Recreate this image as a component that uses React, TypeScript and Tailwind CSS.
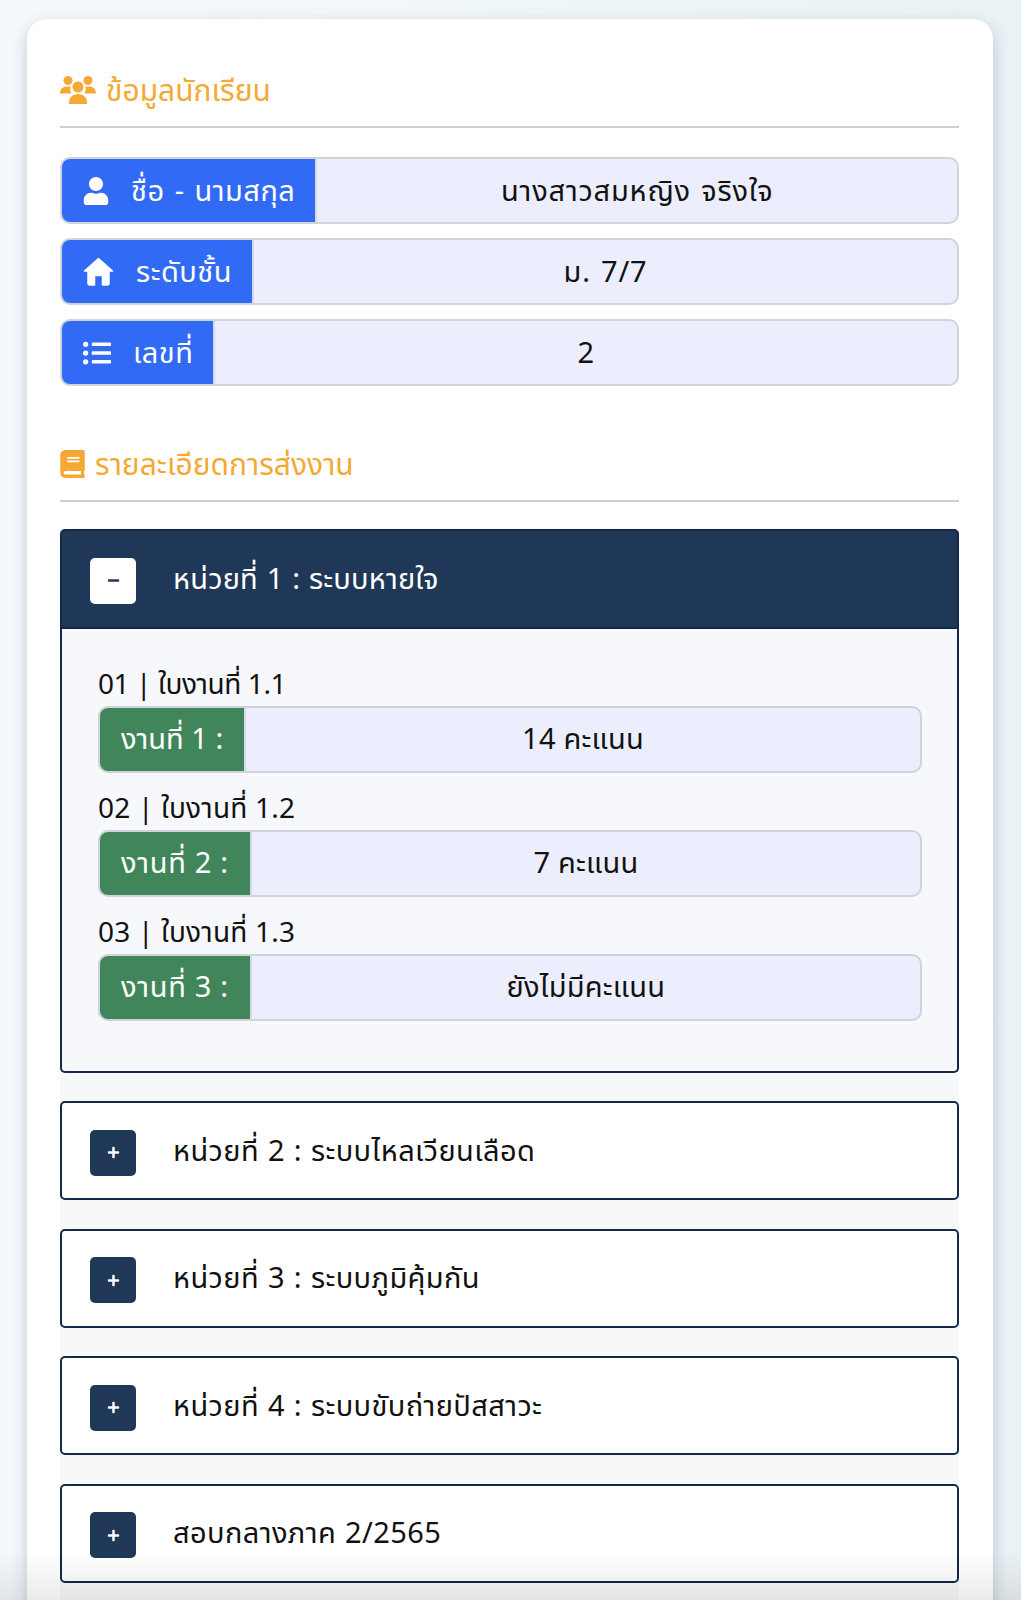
import { FaUser, FaListUl, FaBook, FaPlus, FaMinus } from 'react-icons/fa';
import type { ReactNode } from 'react';

const font = { fontFamily: '"Noto Sans", "Noto Sans Thai", "Liberation Sans", sans-serif' };

function UsersIcon() {
  return (
    <svg viewBox="0 0 36 28" className="w-[36px] h-[28px]" fill="currentColor">
      <circle cx="8" cy="4.5" r="4.5" />
      <circle cx="28" cy="4.5" r="4.5" />
      <circle cx="18" cy="11" r="5.5" />
      <path d="M0 17.5C0 13 3 10.5 7 10.5h3.5a8 8 0 0 0 1 7z" />
      <path d="M36 17.5c0-4.500-3-7-7-7h-3.500a8 8 0 0 1-1 7z" />
      <path d="M9 28v-1.500C9 21.500 13 18 18 18s9 3.500 9 8.500V28z" />
    </svg>
  );
}

function HouseIcon() {
  return (
    <svg viewBox="0 0 31 29" className="w-[31px] h-[29px]" fill="white" stroke="white" strokeWidth="1.5" strokeLinejoin="round">
      <path d="M15.500 1.500L29.500 14H26v12.500a1.500 1.500 0 0 1-1.500 1.500h-5v-8.500a1 1 0 0 0-1-1h-6a1 1 0 0 0-1 1V28h-5A1.500 1.500 0 0 1 5 26.500V14H1.500z" />
    </svg>
  );
}

function InfoRow({ icon, label, value, labelClass = 'bg-[#316bf5] gap-[22px] pl-[21px] pr-[20px] tracking-[0.5px] [word-spacing:2px]', valueClass = 'tracking-[0.8px] [word-spacing:2px]' }: { icon?: ReactNode; label: string; value: string; labelClass?: string; valueClass?: string }) {
  return (
    <div className="flex h-[67px] rounded-[10px] border-2 border-[#ced4da] bg-[#eceefd] overflow-hidden">
      <div className={`flex items-center text-white text-[29px] shrink-0 border-r-2 border-r-[#d5d9ea] ${labelClass}`}>
        {icon}
        <span className="pb-[2px] whitespace-nowrap">{label}</span>
      </div>
      <div className={`flex-1 flex items-center justify-center pb-[2px] text-[29px] text-[#111] ${valueClass}`}>{value}</div>
    </div>
  );
}

function SectionTitle({ icon, text }: { icon: ReactNode; text: string }) {
  return (
    <div className="flex items-center gap-[10px] h-[67px] border-b-2 border-[#cfcfcf] text-[#f4a935] text-[30px] pb-[7px]">
      {icon}
      <span className="pb-[2px]">{text}</span>
    </div>
  );
}

function UnitHeader({ title, open }: { title: string; open?: boolean }) {
  return (
    <div className={`flex items-center gap-[37px] px-[28px] border-2 border-[#14284b] rounded-[5px] ${open ? 'h-[99.5px] bg-[#1f3858] text-white rounded-b-none' : 'h-[99px] bg-white text-[#111]'}`}>
      <div className={`w-[46px] h-[46px] mt-[4px] rounded-[5px] flex items-center justify-center ${open ? 'bg-white text-[#1f3858]' : 'bg-[#1f3858] text-white'}`}>
        {open ? <FaMinus className="w-[13px] h-[13px]" /> : <FaPlus className="w-[13px] h-[13px]" />}
      </div>
      <span className={`pb-[2px] text-[29px] [word-spacing:1px] ${open ? 'tracking-[0.2px]' : 'tracking-[0.4px]'}`}>{title}</span>
    </div>
  );
}

const works = [
  { title: '01 | ใบงานที่ 1.1', titleClass: 'tracking-[-0.4px]', label: 'งานที่ 1 :', labelClass: 'bg-[#40865a] w-[146px] pl-[21px] pr-[10px] tracking-[0px]', score: '14 คะแนน' },
  { title: '02 | ใบงานที่ 1.2', titleClass: 'tracking-[0.2px]', label: 'งานที่ 2 :', labelClass: 'bg-[#40865a] px-[21px] tracking-[0.7px]', score: '7 คะแนน' },
  { title: '03 | ใบงานที่ 1.3', titleClass: 'tracking-[0.2px]', label: 'งานที่ 3 :', labelClass: 'bg-[#40865a] px-[21px] tracking-[0.7px]', score: 'ยังไม่มีคะแนน' },
];

const closedUnits = ['หน่วยที่ 2 : ระบบไหลเวียนเลือด', 'หน่วยที่ 3 : ระบบภูมิคุ้มกัน', 'หน่วยที่ 4 : ระบบขับถ่ายปัสสาวะ', 'สอบกลางภาค 2/2565'];

export default function App() {
  return (
    <div className="relative h-[1600px] overflow-hidden bg-gradient-to-r from-[#f5f9fc] to-[#e9f2f5] pt-[19px] pl-[27px] pr-[28px]" style={font}>
      <div className="bg-white rounded-t-[20px] shadow-[0_6px_16px_rgba(60,80,100,0.28)] pl-[33px] pr-[34px] pt-[42px] h-[1700px]">
        {/* Student info */}
        <SectionTitle icon={<UsersIcon />} text="ข้อมูลนักเรียน" />
        <div className="flex flex-col gap-[14px] mt-[29px]">
          <InfoRow icon={<FaUser className="w-[26px] h-[28px]" />} label="ชื่อ - นามสกุล" value="นางสาวสมหญิง จริงใจ" />
          <InfoRow icon={<HouseIcon />} label="ระดับชั้น" value="ม. 7/7" />
          <InfoRow icon={<FaListUl className="w-[28px] h-[28px]" />} label="เลขที่" value="2" />
        </div>

        {/* Work details */}
        <div className="mt-[49px]">
          <SectionTitle icon={<FaBook className="w-[25px] h-[28px]" />} text="รายละเอียดการส่งงาน" />
        </div>

        <div className="mt-[27px] bg-[#f6f8fa] flex flex-col gap-[28.5px] pb-[40px]">
          <div>
            <UnitHeader title="หน่วยที่ 1 : ระบบหายใจ" open />
            <div className="border-2 border-t-0 border-[#14284b] rounded-b-[5px] bg-[#f7f8fb] h-[444px] pl-[36px] pr-[35px] pt-[20px]">
              {works.map((w) => (
                <div key={w.title}>
                  <div className={`h-[57px] pt-[12px] flex items-center text-[28px] text-[#111] ${w.titleClass}`}>{w.title}</div>
                  <InfoRow label={w.label} value={w.score} labelClass={w.labelClass} valueClass="tracking-[0.2px]" />
                </div>
              ))}
            </div>
          </div>
          {closedUnits.map((u) => (
            <UnitHeader key={u} title={u} />
          ))}
        </div>
      </div>
      {/* bottom fade */}
      <div className="absolute left-0 right-0 bottom-0 h-[50px] bg-gradient-to-b from-transparent to-[rgba(0,0,0,0.08)]" />
    </div>
  );
}
